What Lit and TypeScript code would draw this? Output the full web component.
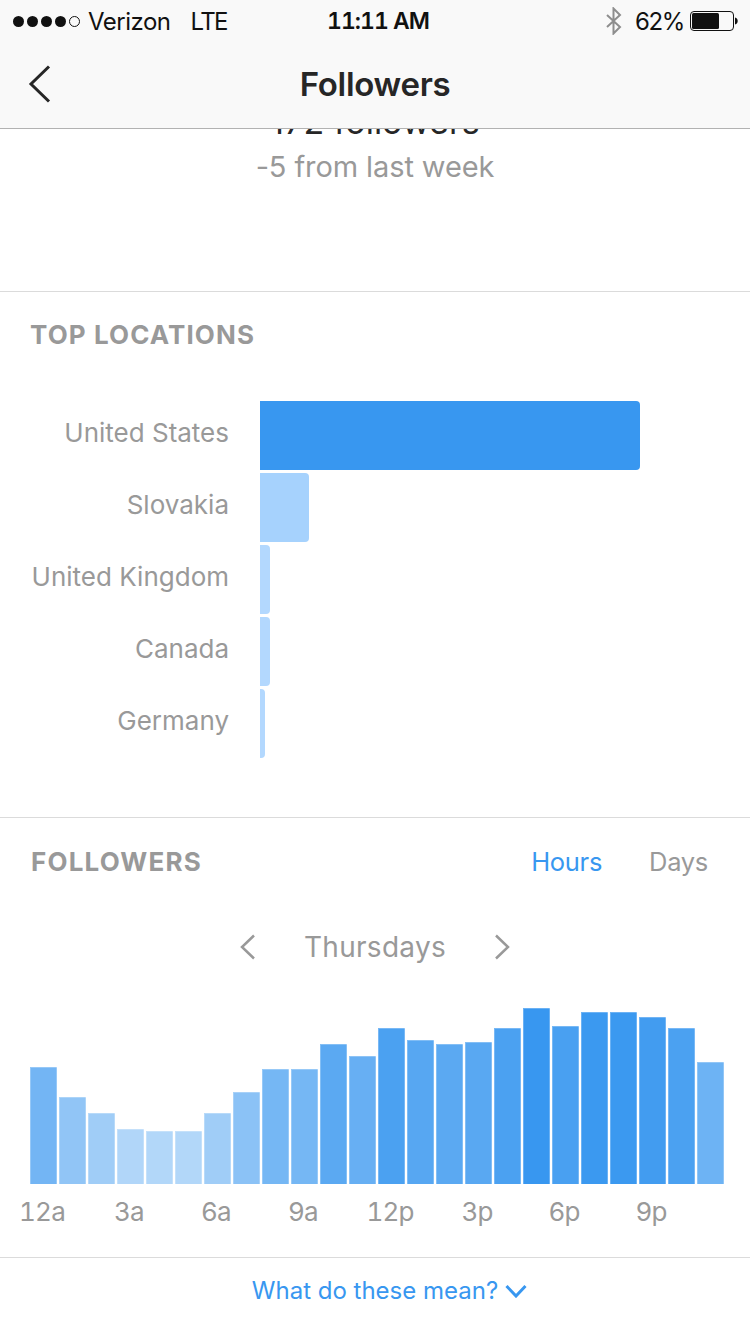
import { LitElement, html, css, svg } from 'lit';
import { customElement } from 'lit/decorators.js';

const LOCATIONS = [
  { name: 'United States', width: 380, color: '#3897f0' },
  { name: 'Slovakia', width: 49, color: '#a6d2fd' },
  { name: 'United Kingdom', width: 10, color: '#b3d8fe' },
  { name: 'Canada', width: 10, color: '#b3d8fe' },
  { name: 'Germany', width: 5, color: '#b3d8fe' },
];

const HOURS = [
  117, 87, 71, 55, 53, 53, 71, 92, 115, 115, 140, 128, 156, 144, 140, 142, 156,
  176, 158, 172, 172, 167, 156, 122,
];

const HOUR_LABELS = ['12a', '3a', '6a', '9a', '12p', '3p', '6p', '9p'];

const chevron = (d: string, w: number, h: number, stroke: string, sw: number) =>
  html`<svg width=${w} height=${h} viewBox="0 0 ${w} ${h}" fill="none">
    ${svg`<path d=${d} stroke=${stroke} stroke-width=${sw} />`}
  </svg>`;

@customElement('app-root')
export class AppRoot extends LitElement {
  static styles = css`
    :host {
      display: block;
      width: 750px;
      height: 1334px;
      overflow: hidden;
      background: #fff;
      font-family: Inter, 'Liberation Sans', sans-serif;
      color: #999;
    }
    .top {
      position: relative;
      z-index: 1;
      background: #f9f9f9;
      border-bottom: 1px solid #b2b2b2;
    }
    .status {
      height: 40px;
      box-sizing: border-box;
      display: flex;
      align-items: center;
      padding: 2px 12px 0 13px;
      font-size: 24px;
      letter-spacing: -0.5px;
      color: #111;
    }
    .dots {
      display: flex;
      gap: 3px;
      margin-right: 8px;
    }
    .dot {
      width: 11px;
      height: 11px;
      border-radius: 50%;
      box-sizing: border-box;
      background: #111;
    }
    .dot.empty {
      background: none;
      border: 1px solid #111;
    }
    .lte {
      margin-left: 20px;
      letter-spacing: -1.6px;
    }
    .time {
      position: absolute;
      left: 0;
      right: 0;
      top: 0;
      height: 43px;
      line-height: 43px;
      text-align: center;
      font-size: 23px;
      font-weight: 600;
      font-variant-numeric: tabular-nums;
      letter-spacing: -1px;
      margin-left: 6px;
    }
    .status-right {
      margin-left: auto;
      display: flex;
      align-items: center;
    }
    .pct {
      margin: 0 6px 0 13px;
      letter-spacing: -1.4px;
    }
    .battery {
      display: block;
    }
    .nav {
      height: 88px;
      display: flex;
      align-items: center;
      justify-content: center;
      position: relative;
      font-size: 33px;
      font-weight: 600;
      color: #262626;
      letter-spacing: -0.3px;
    }
    .back {
      position: absolute;
      left: 28px;
      top: 25px;
      display: block;
    }
    .summary {
      height: 162px;
      text-align: center;
      overflow: hidden;
      font-size: 29px;
    }
    .count {
      margin-top: -24px;
      font-size: 34px;
      color: #262626;
      line-height: 34px;
    }
    .change {
      margin-top: 10px;
      line-height: 36px;
      letter-spacing: -0.1px;
    }
    section {
      border-top: 1px solid #dbdbdb;
    }
    .heading {
      font-size: 26px;
      font-weight: 700;
      letter-spacing: 1.1px;
      line-height: 32px;
    }
    .locations {
      height: 526px;
      box-sizing: border-box;
      padding: 27px 0 0 30px;
    }
    .rows {
      margin-top: 50px;
      display: flex;
      flex-direction: column;
      gap: 3px;
    }
    .row {
      display: flex;
      align-items: center;
      height: 69px;
    }
    .row-label {
      width: 199px;
      margin-right: 31px;
      padding-bottom: 6px;
      text-align: right;
      font-size: 26px;
      white-space: nowrap;
    }
    .row-bar {
      height: 100%;
      border-radius: 0 4px 4px 0;
    }
    .followers {
      height: 440px;
      box-sizing: border-box;
      padding-top: 28px;
    }
    .followers-head {
      display: flex;
      align-items: center;
      padding: 0 42px 0 31px;
    }
    .followers-head .heading {
      letter-spacing: 1.2px;
    }
    .tab {
      font-size: 25.5px;
      letter-spacing: -0.3px;
      line-height: 32px;
    }
    .tab.hours {
      margin-left: auto;
      color: #3897f0;
    }
    .tab.days {
      margin-left: 47px;
    }
    .day-picker {
      margin-top: 53px;
      display: flex;
      align-items: center;
      justify-content: center;
      gap: 49px;
      height: 32px;
      font-size: 28px;
      letter-spacing: 0.3px;
    }
    .day-picker svg {
      display: block;
    }
    .chart {
      margin-top: 29px;
      height: 192px;
      padding-left: 30px;
      display: flex;
      align-items: flex-end;
      gap: 2px;
    }
    .bar {
      width: 27px;
      background: #3897f0;
      box-shadow: inset 1px 1px 0 rgba(255, 255, 255, 0.25),
        inset -1px 0 0 rgba(255, 255, 255, 0.25);
    }
    .axis {
      display: flex;
      margin: 12px 0 0 -1.5px;
    }
    .axis span {
      width: 87px;
      text-align: center;
      font-size: 26px;
      font-variant-numeric: tabular-nums;
      letter-spacing: -0.8px;
      line-height: 32px;
    }
    .more {
      border-top: 1px solid #dbdbdb;
      height: 66px;
      box-sizing: border-box;
      display: flex;
      align-items: center;
      justify-content: center;
      gap: 7px;
      padding-left: 29px;
      color: #3897f0;
      font-size: 24px;
    }
  `;

  render() {
    return html`
      <div class="top">
        <div class="status">
          <div class="dots">
            <span class="dot"></span><span class="dot"></span><span class="dot"></span
            ><span class="dot"></span><span class="dot empty"></span>
          </div>
          <span>Verizon</span>
          <span class="lte">LTE</span>
          <span class="time">11:11 AM</span>
          <div class="status-right">
            <svg width="16" height="28" viewBox="0 0 16 28" fill="none">
              <path d="M1 8l13 12-6.5 6.5V1.5L14 8 1 20" stroke="#8e8e8e" stroke-width="2" />
            </svg>
            <span class="pct">62%</span>
            <svg class="battery" width="48" height="20" viewBox="0 0 48 20">
              <rect x="0.5" y="0.5" width="43" height="19" rx="3.5" fill="none" stroke="#111" />
              <rect x="2" y="2" width="27" height="16" rx="1.5" fill="#111" />
              <path d="M45 6.5c1.8.4 2.7 1.7 2.7 3.5s-.9 3.1-2.7 3.5z" fill="#111" />
            </svg>
          </div>
        </div>
        <div class="nav">
          <svg class="back" width="24" height="38" viewBox="0 0 24 38" fill="none">
            <path d="M21 1.5L3 19l18 17.5" stroke="#262626" stroke-width="3" />
          </svg>
          Followers
        </div>
      </div>

      <div class="summary">
        <div class="count">172 followers</div>
        <div class="change">-5 from last week</div>
      </div>

      <section class="locations">
        <div class="heading">TOP LOCATIONS</div>
        <div class="rows">
          ${LOCATIONS.map(
            (l) => html`<div class="row">
              <div class="row-label">${l.name}</div>
              <div class="row-bar" style="width:${l.width}px;background:${l.color}"></div>
            </div>`
          )}
        </div>
      </section>

      <section class="followers">
        <div class="followers-head">
          <div class="heading">FOLLOWERS</div>
          <span class="tab hours">Hours</span>
          <span class="tab days">Days</span>
        </div>
        <div class="day-picker">
          ${chevron('M15 1.5L3 13l12 11.5', 16, 26, '#999', 2.5)}
          <span>Thursdays</span>
          ${chevron('M1 1.5L13 13 1 24.5', 16, 26, '#999', 2.5)}
        </div>
        <div class="chart">
          ${HOURS.map(
            (h) =>
              html`<div class="bar" style="height:${h}px;opacity:${(0.38 + ((h - 53) / 123) * 0.62).toFixed(2)}"></div>`
          )}
        </div>
        <div class="axis">${HOUR_LABELS.map((l) => html`<span>${l}</span>`)}</div>
      </section>

      <div class="more">
        <span>What do these mean?</span>
        ${chevron('M1.5 2l9.5 10 9.5-10', 22, 14, '#3897f0', 3)}
      </div>
    `;
  }
}

declare global {
  interface HTMLElementTagNameMap {
    'app-root': AppRoot;
  }
}
